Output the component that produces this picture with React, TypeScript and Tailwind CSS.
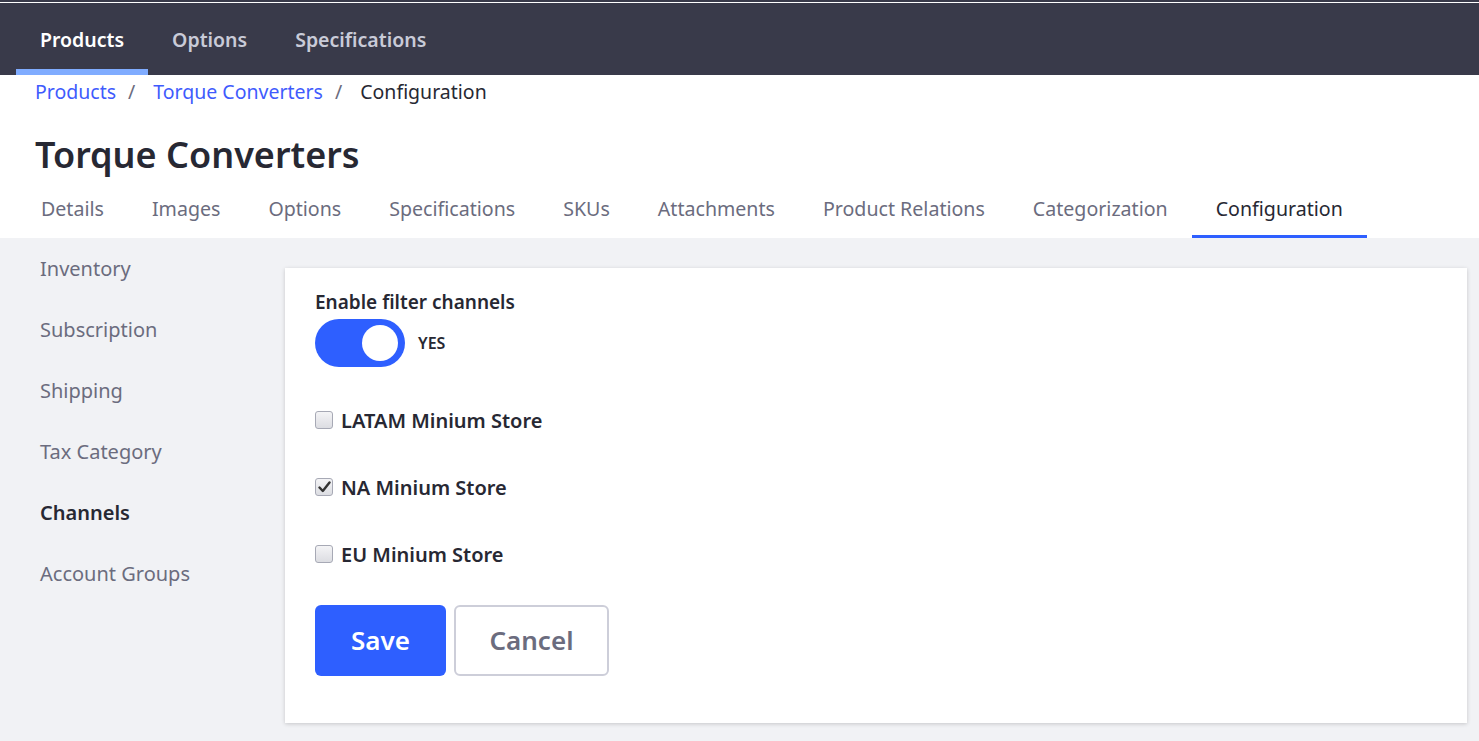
import React from "react";

const font = { fontFamily: '"Noto Sans", "Open Sans", sans-serif' };

function Check({ checked }: { checked?: boolean }) {
  return (
    <span className="w-[18px] h-[18px] rounded-[3px] border border-[#a7a9b5] bg-gradient-to-b from-[#f4f4f6] to-[#dcdde2] flex items-center justify-center shrink-0">
      {checked && (
        <svg width="13" height="12" viewBox="0 0 13 12">
          <path d="M1.5 6.5 L4.8 10 L11.5 1.5" fill="none" stroke="#333" strokeWidth="2.4" strokeLinecap="round" strokeLinejoin="round" />
        </svg>
      )}
    </span>
  );
}

export default function App() {
  const tabs = ["Details", "Images", "Options", "Specifications", "SKUs", "Attachments", "Product Relations", "Categorization", "Configuration"];
  const side = ["Inventory", "Subscription", "Shipping", "Tax Category", "Channels", "Account Groups"];
  const stores: [string, boolean][] = [["LATAM Minium Store", false], ["NA Minium Store", true], ["EU Minium Store", false]];
  return (
    <div style={font} className="w-[1479px] h-[741px] overflow-hidden bg-[#f1f2f5] flex flex-col">
      <div className="bg-[#393a4a] pt-[2px]">
        <div className="h-px bg-white" />
        <div className="h-[72px] flex pl-4">
          {["Products", "Options", "Specifications"].map((t, i) => (
            <div key={t} className={`px-6 flex items-center text-[19.5px] font-semibold border-b-[6px] ${i === 0 ? "text-white border-[#80acff]" : "text-[#c9cbd8] border-transparent"}`}>
              <span className="pt-[7px]">{t}</span>
            </div>
          ))}
        </div>
      </div>
      <div className="bg-white">
        <div className="pl-[35px] h-[34px] flex items-center text-[19.5px]">
          <span className="text-[#3f5bfd]">Products</span>
          <span className="text-[#6b6c7e] ml-[12px]">/</span>
          <span className="text-[#3f5bfd] ml-[18px]">Torque Converters</span>
          <span className="text-[#6b6c7e] ml-[12px]">/</span>
          <span className="text-[#272833] ml-[18px]">Configuration</span>
        </div>
        <div className="pl-[35px] pt-[22px] h-[87px] text-[36px] font-semibold text-[#272833] leading-[48px]">Torque Converters</div>
        <div className="flex pl-[17px] h-[42px]">
          {tabs.map((t) => (
            <div key={t} className={`px-6 text-[19.6px] leading-[26px] border-b-[3px] ${t === "Configuration" ? "text-[#272833] border-[#2e5fff]" : "text-[#6b6c7e] border-transparent"}`}>
              {t}
            </div>
          ))}
        </div>
      </div>
      <div className="flex flex-1">
        <div className="w-[285px] pl-10 pt-[17px] flex flex-col">
          {side.map((s) => (
            <div key={s} className={`h-[61px] text-[20px] leading-[28px] ${s === "Channels" ? "font-semibold text-[#272833]" : "text-[#6b6c7e]"}`}>{s}</div>
          ))}
        </div>
        <div className="mt-[30px] w-[1182px] h-[455px] bg-white shadow-[0_1px_4px_rgba(0,0,0,0.18)] pl-[30px] pt-[21px]">
          <div className="text-[19px] font-semibold text-[#272833] leading-[26px]">Enable filter channels</div>
          <div className="flex items-center mt-[4px] gap-[13px]">
            <div className="w-[90px] h-[48px] rounded-full bg-[#2e5fff] flex items-center justify-end pr-[7px]">
              <div className="w-[36px] h-[36px] rounded-full bg-white" />
            </div>
            <span className="text-[16px] font-semibold text-[#272833]">YES</span>
          </div>
          <div className="flex flex-col mt-[41px]">
            {stores.map(([s, c]) => (
              <div key={s} className="h-[67px] flex items-start gap-[8px]">
                <span className="mt-[3px]"><Check checked={c} /></span>
                <span className="text-[20px] font-semibold text-[#272833] leading-[26px]">{s}</span>
              </div>
            ))}
          </div>
          <div className="flex gap-2 -mt-[4px]">
            <button className="w-[131px] h-[71px] rounded-[6px] bg-[#2e5fff] text-white text-[26px] font-semibold">Save</button>
            <button className="w-[155px] h-[71px] rounded-[6px] border-2 border-[#cdced9] bg-white text-[#6b6c7e] text-[26px] font-semibold">Cancel</button>
          </div>
        </div>
      </div>
    </div>
  );
}
